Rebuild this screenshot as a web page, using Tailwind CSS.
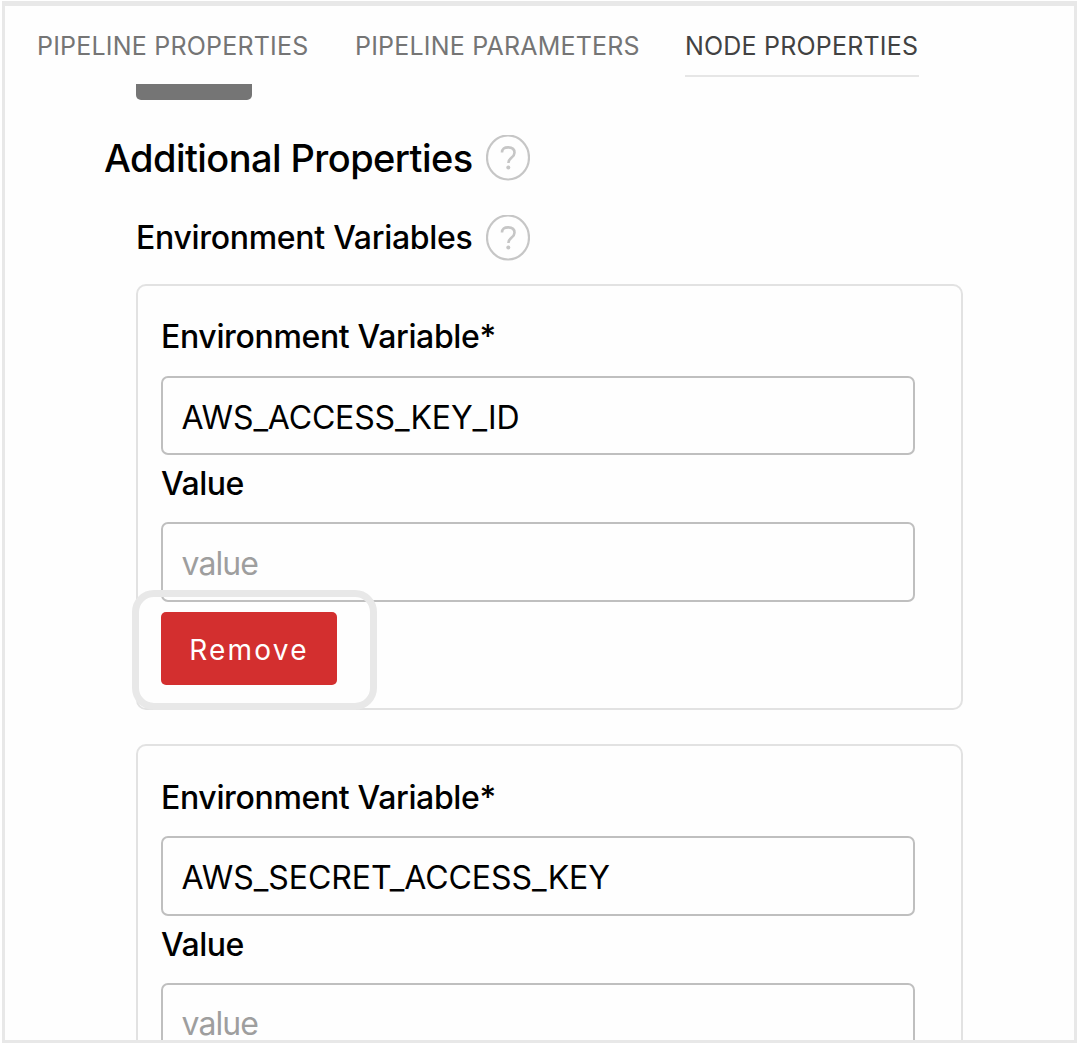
<!DOCTYPE html>
<html lang="en">
<head>
<meta charset="utf-8">
<title>Node Properties</title>
<script src="https://cdn.jsdelivr.net/npm/@tailwindcss/browser@4"></script>
</head>
<body class="bg-white font-['Inter',sans-serif] text-black">
<div class="w-[1081px] h-[1045px] pl-[2px] pt-px overflow-hidden">
  <div class="w-[1075px] h-[1042px] border-[3px] border-t-[5px] border-[#e8e8e8] bg-[#fefefe] overflow-hidden flex flex-col">
    <nav class="flex shrink-0 h-[78px] pl-[31px] text-[25px] tracking-[0.2px] text-[#757575] whitespace-nowrap">
      <a class="w-[318px] h-[71px] leading-[80px] pl-px">PIPELINE PROPERTIES</a>
      <a class="w-[331px] h-[71px] leading-[80px] pl-px">PIPELINE PARAMETERS</a>
      <a class="w-[234px] h-[71px] leading-[80px] border-b-2 border-[#e6e6e6] text-[#424242]">NODE PROPERTIES</a>
    </nav>

    <main class="flex-1 min-h-0 overflow-hidden flex flex-col">
      <div class="shrink-0 ml-[131px] w-[116px] h-4 rounded-b-[5px] bg-[#757575]"></div>

      <div class="shrink-0 mt-[34px] ml-[99px] flex items-center h-[47px]">
        <h2 class="w-[382px] text-[38px] font-medium tracking-[-0.57px] leading-[46px] whitespace-nowrap">Additional Properties</h2>
        <svg class="w-[44px] h-[46px]" viewBox="0 0 44 46" fill="none" stroke="#c6c6c6"><ellipse cx="22" cy="22.5" rx="21" ry="22" stroke-width="2.2"/><path d="M16 17.6C16 13.8 18.4 12.4 22.2 12.4s6.3 2 6.3 5.3c0 5-6 5.2-6 9.8v.6" stroke-width="2.6"/><circle cx="22.3" cy="32.6" r="2" fill="#c6c6c6" stroke="none"/></svg>
      </div>

      <div class="shrink-0 mt-[33px] ml-[131px] flex items-center h-[47px]">
        <h3 class="w-[350px] text-[32px] font-medium tracking-[-0.3px] leading-[48px] whitespace-nowrap">Environment Variables</h3>
        <svg class="w-[44px] h-[46px]" viewBox="0 0 44 46" fill="none" stroke="#c6c6c6"><ellipse cx="22" cy="22.5" rx="21" ry="22" stroke-width="2.2"/><path d="M16 17.6C16 13.8 18.4 12.4 22.2 12.4s6.3 2 6.3 5.3c0 5-6 5.2-6 9.8v.6" stroke-width="2.6"/><circle cx="22.3" cy="32.6" r="2" fill="#c6c6c6" stroke="none"/></svg>
      </div>

      <section class="relative shrink-0 mt-[23px] ml-[131px] w-[827px] h-[426px] border-2 border-[#e2e2e2] rounded-[10px] pt-[30px] pl-[23px] flex flex-col">
        <label class="h-[41px] leading-[41px] text-[32px] font-medium tracking-[-0.35px]">Environment Variable*</label>
        <div class="mt-[19px] w-[754px] h-[79px] border-2 border-[#bfbfbf] rounded-[7px] pl-[18.5px] leading-[79px] text-[32px] tracking-[-0.15px]">AWS_ACCESS_KEY_ID</div>
        <label class="mt-2 h-[41px] leading-[41px] text-[32px] font-medium tracking-[-0.5px]">Value</label>
        <div class="mt-[18px] w-[754px] h-[80px] border-2 border-[#bfbfbf] rounded-[7px] pl-[18.5px] leading-[79px] text-[32px] tracking-[-0.9px] text-[#9e9e9e]">value</div>
        <button class="mt-[10px] w-[176px] h-[73px] rounded-[5px] bg-[#d32f2f] text-white text-[28px] tracking-[2.2px] leading-[75px]"><span class="block pt-px">Remove</span></button>
        <div class="absolute left-[-6px] top-[304px] w-[245px] h-[120px] border-[7px] border-[#e8e8e8] rounded-[22px]"></div>
      </section>

      <section class="shrink-0 mt-[34px] ml-[131px] w-[827px] h-[426px] border-2 border-[#e2e2e2] rounded-[10px] pt-[30px] pl-[23px] flex flex-col">
        <label class="h-[41px] leading-[43px] text-[32px] font-medium tracking-[-0.35px]">Environment Variable*</label>
        <div class="mt-[19px] w-[754px] h-[80px] border-2 border-[#bfbfbf] rounded-[7px] pl-[18.5px] leading-[80px] text-[32px] tracking-[-0.05px]">AWS_SECRET_ACCESS_KEY</div>
        <label class="mt-2 h-[41px] leading-[41px] text-[32px] font-medium tracking-[-0.5px]">Value</label>
        <div class="mt-[18px] w-[754px] h-[80px] border-2 border-[#bfbfbf] rounded-[7px] pl-[18.5px] leading-[77px] text-[32px] tracking-[-0.9px] text-[#9e9e9e]">value</div>
      </section>
    </main>
  </div>
</div>
</body>
</html>
